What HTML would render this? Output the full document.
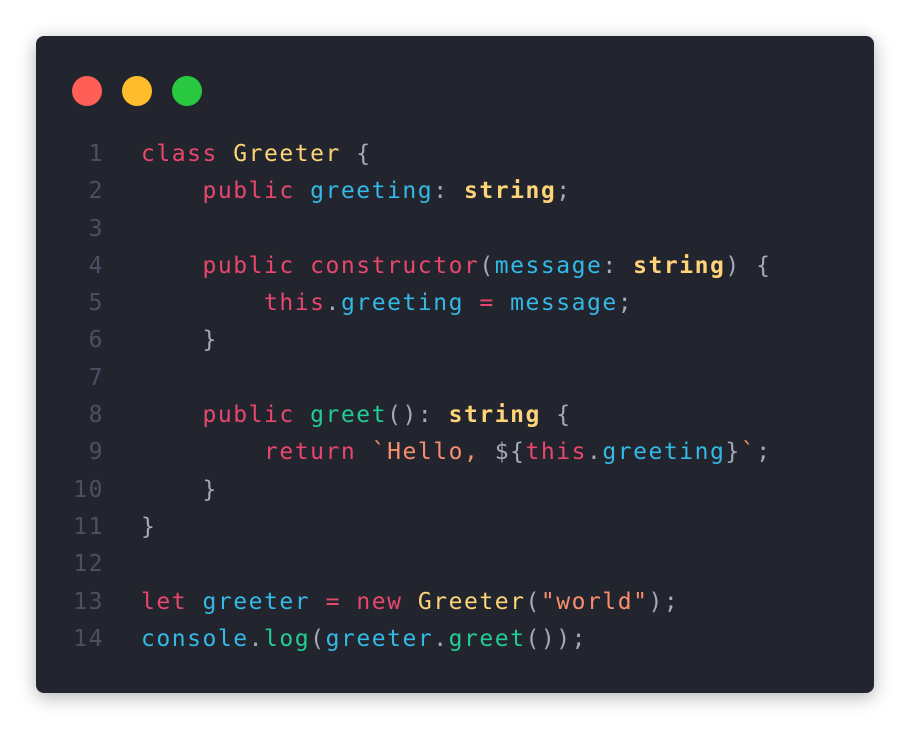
<!DOCTYPE html>
<html><head><meta charset="utf-8"><style>
html,body{margin:0;padding:0;background:#fff;width:910px;height:730px;overflow:hidden}
.card{position:absolute;left:36px;top:36px;width:838px;height:657px;background:#22252e;border-radius:8px;box-shadow:0 4px 18px rgba(0,0,0,0.3)}
.dot{position:absolute;top:40px;width:30px;height:30px;border-radius:50%}
pre{position:absolute;margin:0;top:100px;font-family:"DejaVu Sans Mono",monospace;font-size:23px;letter-spacing:1.53px;line-height:37.3px;color:#a3abb9}
.ln{left:24px;width:44px;text-align:right;color:#4b5162}
.code{left:105px}
.k{color:#e8466c}.c{color:#ffd378}.b{color:#34b8e6}.g{color:#22cc92}.s{color:#f98e6c}.t{color:#ffd378;font-weight:bold}
</style></head><body>
<div class="card">
<div class="dot" style="left:36px;background:#ff5f57"></div>
<div class="dot" style="left:86px;background:#ffbd2e"></div>
<div class="dot" style="left:136px;background:#28c940"></div>
<pre class="ln">1
2
3
4
5
6
7
8
9
10
11
12
13
14</pre>
<pre class="code"><span class="k">class</span> <span class="c">Greeter</span> {
    <span class="k">public</span> <span class="b">greeting</span>: <span class="t">string</span>;

    <span class="k">public</span> <span class="k">constructor</span>(<span class="b">message</span>: <span class="t">string</span>) {
        <span class="k">this</span>.<span class="b">greeting</span> <span class="k">=</span> <span class="b">message</span>;
    }

    <span class="k">public</span> <span class="g">greet</span>(): <span class="t">string</span> {
        <span class="k">return</span> <span class="s">`Hello, </span>${<span class="k">this</span>.<span class="b">greeting</span>}<span class="s">`</span>;
    }
}

<span class="k">let</span> <span class="b">greeter</span> <span class="k">=</span> <span class="k">new</span> <span class="c">Greeter</span>(<span class="s">"world"</span>);
<span class="b">console</span>.<span class="g">log</span>(<span class="b">greeter</span>.<span class="g">greet</span>());</pre>
</div>
</body></html>
